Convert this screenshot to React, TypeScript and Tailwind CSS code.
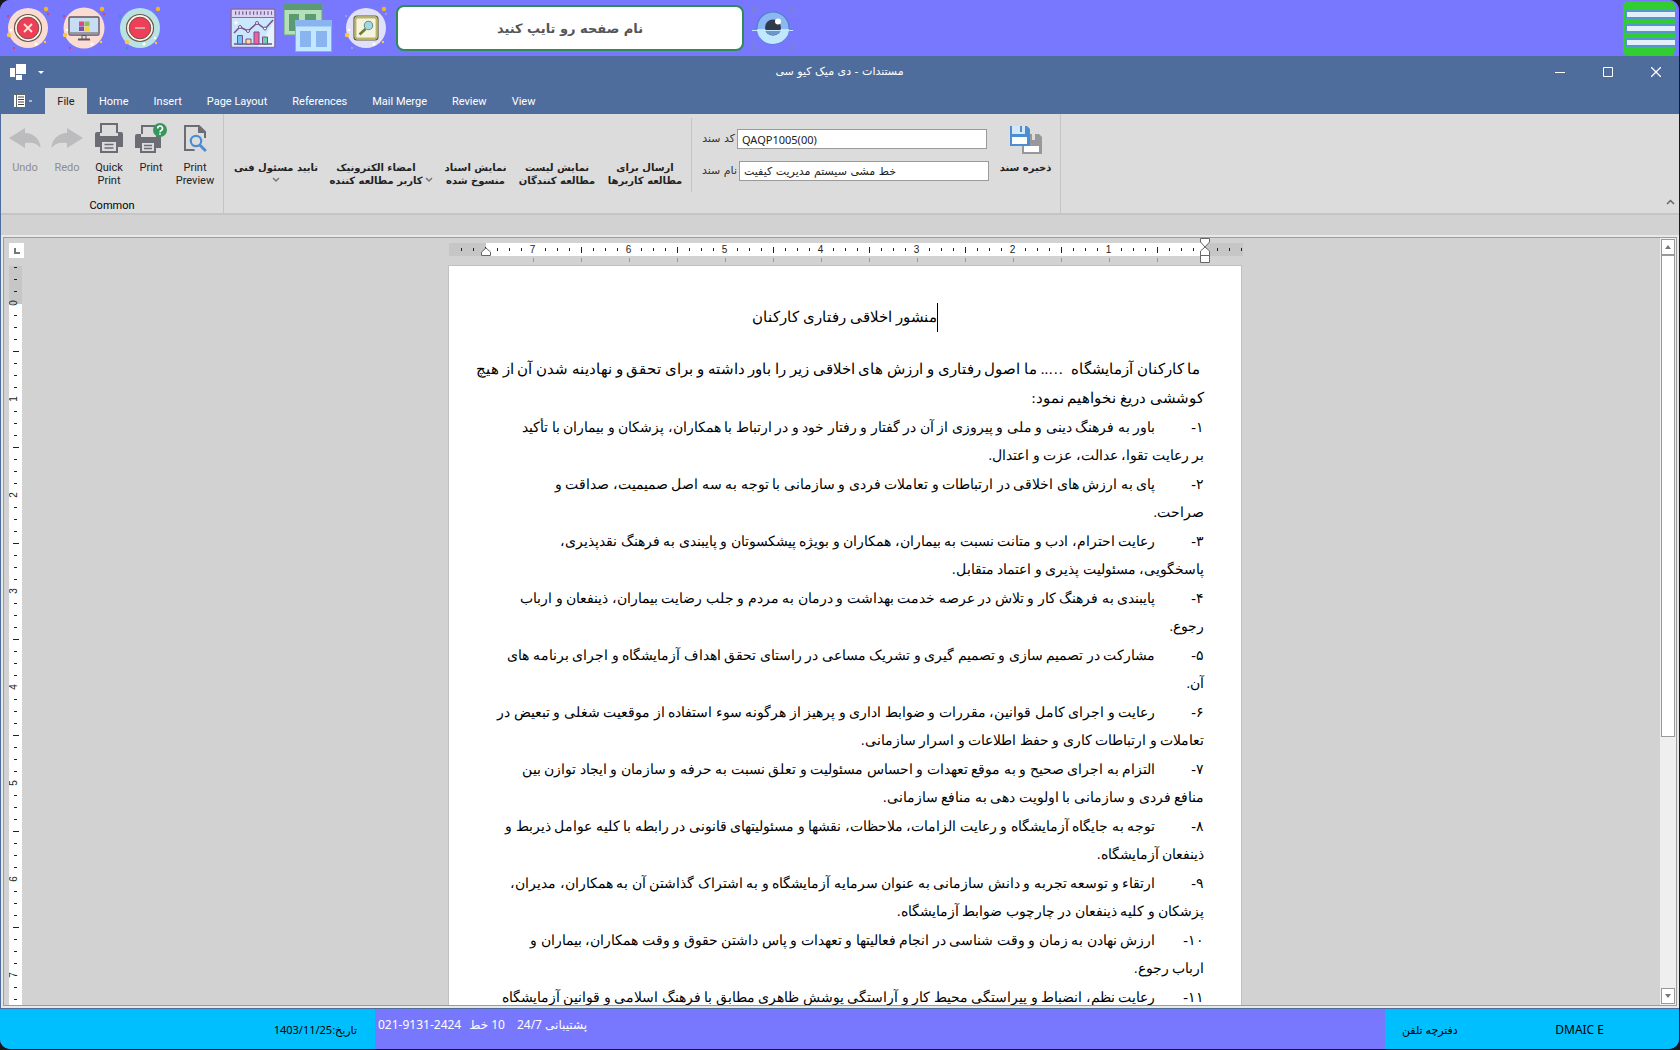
import React from "react";

const intro = [
  " ما کارکنان آزمایشگاه  ….. ما اصول رفتاری و ارزش های اخلاقی زیر را باور داشته و برای تحقق و نهادینه شدن آن از هیچ",
  "کوششی دریغ نخواهیم نمود:",
];

const items: [string, string, string][] = [
  ["۱-", "باور به فرهنگ دینی و ملی و پیروزی از آن در گفتار و رفتار خود و در ارتباط با همکاران، پزشکان و بیماران با تأکید", "بر رعایت تقوا، عدالت، عزت و اعتدال."],
  ["۲-", "پای به ارزش های اخلاقی در ارتباطات و تعاملات فردی و سازمانی با توجه به سه اصل صمیمیت، صداقت و", "صراحت."],
  ["۳-", "رعایت احترام، ادب و متانت نسبت به بیماران، همکاران و بویژه پیشکسوتان و پایبندی به فرهنگ نقدپذیری،", "پاسخگویی، مسئولیت پذیری و اعتماد متقابل."],
  ["۴-", "پایبندی به فرهنگ کار و تلاش در عرصه خدمت بهداشت و درمان به مردم و جلب رضایت بیماران، ذینفعان و ارباب", "رجوع."],
  ["۵-", "مشارکت در تصمیم سازی و تصمیم گیری و تشریک مساعی در راستای تحقق اهداف آزمایشگاه و اجرای برنامه های", "آن."],
  ["۶-", "رعایت و اجرای کامل قوانین، مقررات و ضوابط اداری و پرهیز از هرگونه سوء استفاده از موقعیت شغلی و تبعیض در", "تعاملات و ارتباطات کاری و حفظ اطلاعات و اسرار سازمانی."],
  ["۷-", "التزام به اجرای صحیح و به موقع تعهدات و احساس مسئولیت و تعلق نسبت به حرفه و سازمان و ایجاد توازن بین", "منافع فردی و سازمانی با اولویت دهی به منافع سازمانی."],
  ["۸-", "توجه به جایگاه آزمایشگاه و رعایت الزامات، ملاحظات، نقشها و مسئولیتهای قانونی در رابطه با کلیه عوامل ذیربط و", "ذینفعان آزمایشگاه."],
  ["۹-", "ارتقاء و توسعه تجربه و دانش سازمانی به عنوان سرمایه آزمایشگاه و به اشتراک گذاشتن آن به همکاران، مدیران،", "پزشکان و کلیه ذینفعان در چارچوب ضوابط آزمایشگاه."],
  ["۱۰-", "ارزش نهادن به زمان و وقت شناسی در انجام فعالیتها و تعهدات و پاس داشتن حقوق و وقت همکاران، بیماران و", "ارباب رجوع."],
  ["۱۱-", "رعایت نظم، انضباط و پیراستگی محیط کار و آراستگی پوشش ظاهری مطابق با فرهنگ اسلامی و قوانین آزمایشگاه", ""],
];

const tabs = ["Home", "Insert", "Page Layout", "References", "Mail Merge", "Review", "View"];

function Sparks({ a, b }: { a: string; b: string }) {
  return (
    <g>
      <circle cx="40" cy="3" r="2.2" fill="#f5b51b" />
      <circle cx="3" cy="29" r="2.2" fill="#fcc73c" />
      <circle cx="39" cy="36" r="1.2" fill="#fcc73c" />
      <circle cx="2" cy="10" r="1.1" fill={a} />
      <circle cx="42" cy="8" r="1.1" fill={b} />
      <circle cx="8" cy="42" r="1.1" fill={a} />
      <circle cx="30" cy="38" r="1.6" fill="#fff" />
      <circle cx="5" cy="24" r="1.2" fill="#fff" />
    </g>
  );
}

function CloseBadge() {
  return (
    <svg width="44" height="44" viewBox="0 0 44 44">
      <circle cx="22" cy="22" r="20" fill="#fbdcd3" />
      <circle cx="22" cy="22" r="13.5" fill="#fff6e8" stroke="#6d5550" strokeWidth="1.2" />
      <circle cx="22" cy="22" r="10.8" fill="#ef3f58" stroke="#6d5550" strokeWidth="1" />
      <path d="M18 18l8 8M26 18l-8 8" stroke="#fbe9d8" strokeWidth="1.8" />
      <Sparks a="#ee3350" b="#ee3350" />
    </svg>
  );
}

function MonitorBadge() {
  return (
    <svg width="44" height="44" viewBox="0 0 44 44">
      <circle cx="22" cy="22" r="20.5" fill="#fbdcd3" />
      <rect x="7" y="11" width="30" height="18" rx="1.5" fill="#c6ddf5" stroke="#5e5560" strokeWidth="1.4" />
      <path d="M7.7 26h28.6v2.5H7.7z" fill="#9b98a5" />
      <path d="M20 29.5h4v4h-4z" fill="#e9dcc8" stroke="#5e5560" />
      <path d="M16 33.5h12" stroke="#5e5560" strokeWidth="1.8" />
      <path d="M17 15.5h5V20h-5z" fill="#e8477e" />
      <path d="M22.5 15.5h5V20h-5z" fill="#8cc152" />
      <path d="M17 20.5h5V25h-5z" fill="#7d52a0" />
      <path d="M22.5 20.5h5v5h-5z" fill="#f7d43c" />
      <Sparks a="#ee3350" b="#ee3350" />
    </svg>
  );
}

function MinusBadge() {
  return (
    <svg width="44" height="44" viewBox="0 0 44 44">
      <circle cx="22" cy="22" r="20" fill="#b9e3e2" />
      <circle cx="22" cy="22" r="13.5" fill="#fff6e8" stroke="#6d5550" strokeWidth="1.2" />
      <circle cx="22" cy="22" r="10.8" fill="#ef3f58" stroke="#6d5550" strokeWidth="1" />
      <path d="M17 22h10" stroke="#d7a99f" strokeWidth="2" />
      <circle cx="40" cy="3" r="2.2" fill="#f5b51b" />
      <circle cx="9" cy="36" r="2.2" fill="#fcc73c" />
      <circle cx="38" cy="37" r="1.2" fill="#fcc73c" />
      <circle cx="2" cy="10" r="1.1" fill="#16a1a8" />
      <circle cx="9" cy="42" r="1.1" fill="#16a1a8" />
      <circle cx="26" cy="38" r="1.5" fill="#fff" />
      <circle cx="37" cy="32" r="1.2" fill="#fff" />
    </svg>
  );
}

function SearchBadge() {
  return (
    <svg width="44" height="44" viewBox="0 0 44 44">
      <circle cx="22" cy="22" r="20" fill="#e0e0f8" />
      <rect x="10" y="10" width="24" height="24" rx="3" fill="#f7f4dd" stroke="#5d5a35" strokeWidth="1.2" />
      <rect x="11.5" y="11.5" width="21" height="21" rx="2" fill="none" stroke="#b9b46a" strokeWidth="1.8" />
      <path d="M21.5 23l-6 5.5" stroke="#6b7b3a" strokeWidth="2.6" />
      <circle cx="24.5" cy="19.5" r="4.2" fill="#9fdbe0" stroke="#6f8a8a" strokeWidth="1.1" />
      <Sparks a="#a5a5d8" b="#a5a5d8" />
    </svg>
  );
}

function ChartIcon() {
  return (
    <svg width="46" height="41" viewBox="0 0 46 41">
      <rect x="1" y="1" width="44" height="38.5" rx="1.5" fill="#cbe7fb" stroke="#8b6aa8" strokeWidth="1.6" />
      <path d="M2 2h42v7H2z" fill="#dcd3f0" />
      <path d="M2 9.5h42" stroke="#8b6aa8" strokeWidth="1.2" />
      <path d="M5 5h37" stroke="#735a99" strokeWidth="3.5" strokeDasharray="1.2 2.4" />
      <path d="M28 38.5L44 14v24.5z" fill="#e4f4ff" />
      <path d="M4 25l6-6 8 4 9-8 8 6 8-9" fill="none" stroke="#75508f" strokeWidth="1.5" />
      <g fill="#fff" stroke="#75508f" strokeWidth="1">
        <circle cx="10" cy="19" r="1.5" />
        <circle cx="18" cy="23" r="1.5" />
        <circle cx="27" cy="15" r="1.5" />
        <circle cx="35" cy="20.5" r="1.5" />
      </g>
      <path d="M4 36h38" stroke="#75508f" strokeWidth="1.3" />
      <g stroke="#75508f" strokeWidth="1">
        <path d="M7.5 27.5h5V36h-5z" fill="#6cc5f4" />
        <path d="M16 31h5v5h-5z" fill="#fbe08a" />
        <path d="M24 24h5v12h-5z" fill="#f0619a" />
        <path d="M32.5 29h5v7h-5z" fill="#6fcfae" />
      </g>
      <path d="M6 12l.7 2 2 .7-2 .7-.7 2-.7-2-2-.7 2-.7z" fill="#fff" />
    </svg>
  );
}

function WindowsIcon() {
  return (
    <svg width="48" height="48" viewBox="0 0 48 48">
      <path d="M0 0h38v31H0z" fill="#b5dfb9" stroke="#66a57b" />
      <path d="M0 0h38v6H0z" fill="#5b9b74" />
      <path d="M5 10h10v17H5zM21 10h11v17H21z" fill="#5b9b74" />
      <path d="M11.5 16.5h36v31h-36z" fill="#c2e8ff" stroke="#7fb1e6" />
      <path d="M11 16h37v6.5H11z" fill="#8ab4f0" />
      <path d="M16 27h11v16H16zM32 27h11v16H32z" fill="#8ab4f0" />
    </svg>
  );
}

function EyeIcon() {
  return (
    <svg width="42" height="42" viewBox="0 0 42 42">
      <path d="M1 7V1h6M35 1h6v6M41 35v6h-6M7 41H1v-6" fill="none" stroke="#7b83c9" strokeWidth="1.5" />
      <circle cx="21" cy="21" r="16" fill="#8bb8f2" stroke="#4e7fc4" strokeWidth="1.2" />
      <path d="M5 22h32a16 15 0 0 1-32 0z" fill="#c2e8ff" />
      <circle cx="21" cy="20.5" r="8" fill="#2f3b4a" />
      <path d="M13.2 23.5a8 6 0 0 0 15.6 0z" fill="#6d97c8" />
      <path d="M0 23.5h41" stroke="#c2e8ff" strokeWidth="1.2" />
      <circle cx="26" cy="14.5" r="3" fill="#fff" />
    </svg>
  );
}

function Chevron() {
  return (
    <svg width="8" height="6" viewBox="0 0 8 6">
      <path d="M1 1l3 3 3-3" fill="none" stroke="#777" strokeWidth="1.5" />
    </svg>
  );
}

function UndoIcon({ flip }: { flip?: boolean }) {
  return (
    <svg width="32" height="32" viewBox="0 0 32 32" className={flip ? "-scale-x-100" : ""}>
      <path d="M0 16L16 6v5c9 0 15.5 7 15.5 15-3-4.500-8-6-15.500-5v5z" fill="#bcbcbe" />
    </svg>
  );
}

function PrinterIcon() {
  return (
    <svg width="32" height="32" viewBox="0 0 32 32">
      <path d="M8 11V2h16v9" fill="none" stroke="#6c6c74" strokeWidth="2" />
      <path d="M2 12q0-2 2-2h3v4h18v-4h3q2 0 2 2v13h-5v-6H7v6H2z" fill="#6c6c74" />
      <path d="M8 19h16v11H8z" fill="#dcdcdc" stroke="#6c6c74" strokeWidth="2" />
      <path d="M11.5 22.5h9M11.5 26h9" stroke="#6c6c74" strokeWidth="1.5" />
    </svg>
  );
}

function PrinterHelpIcon() {
  return (
    <svg width="34" height="32" viewBox="0 0 34 32">
      <path d="M8 12V4h13" fill="none" stroke="#6c6c74" strokeWidth="2" />
      <path d="M1 14q0-2 2-2h4v3h15v-2h5v13h-5v-6H6v6H1z" fill="#6c6c74" />
      <path d="M7 20h14v10H7z" fill="#dcdcdc" stroke="#6c6c74" strokeWidth="2" />
      <path d="M10 23.5h8M10 26.5h8" stroke="#6c6c74" strokeWidth="1.3" />
      <circle cx="26" cy="8" r="7" fill="#35985a" />
      <path d="M23.7 6.5a2.400 2.400 0 1 1 3.500 2q-1.200.7-1.200 1.700M26 11.300v1.500" fill="none" stroke="#fff" strokeWidth="1.6" />
    </svg>
  );
}

function PreviewIcon() {
  return (
    <svg width="32" height="32" viewBox="0 0 32 32">
      <path d="M26 28H6V4h14l6 6v9" fill="none" stroke="#6c6c74" strokeWidth="2" />
      <path d="M19 4v7h7z" fill="#6c6c74" />
      <path d="M13 16h15v14H16z" fill="#dcdcdc" />
      <circle cx="17" cy="19" r="5.2" fill="#dcdcdc" stroke="#4b8fd2" strokeWidth="2.2" />
      <path d="M20.8 23l6 6" stroke="#4b8fd2" strokeWidth="3" />
    </svg>
  );
}

function SaveIcon() {
  return (
    <svg width="32" height="28" viewBox="0 0 32 28">
      <path d="M12 8h17l3 3v17H12z" fill="#98989c" />
      <path d="M22 8h3v6h-3z" fill="#dcdcdc" />
      <path d="M14 20h15v6H14z" fill="#fff" />
      <path d="M0 0h17l3 3v17H0z" fill="#4b8fd2" />
      <path d="M2 0h13v8H2z" fill="#d7e6f5" />
      <path d="M10 0h2v6h-2z" fill="#4b8fd2" />
      <path d="M2 11h15v7H2z" fill="#fff" />
    </svg>
  );
}

function HorizontalRuler() {
  const ticks = Array.from({ length: 66 }, (_, i) => i - 3).filter((k) => k !== 0);
  return (
    <svg width="794" height="23" viewBox="-1 0 794 23" className="overflow-visible">
      <path d="M0 1h794v13H0z" fill="#c6c6c6" />
      <path d="M37 1h719v13H37z" fill="#fff" />
      {ticks.map((k) => {
        const x = 756.5 - 12 * k;
        if (k > 0 && k % 8 === 0 && k < 60)
          return (
            <text key={k} x={x - 1} y="11" textAnchor="middle" fontSize="10" fill="#222">
              {k / 8}
            </text>
          );
        return <path key={k} d={k > 0 && k % 4 === 0 ? `M${x} 5v6` : `M${x} 6v3`} stroke="#222" />;
      })}
      {Array.from({ length: 14 }, (_, i) => (
        <path key={i} d={`M${756.5 - 48 * (i + 1)} 16v4`} stroke="#999" />
      ))}
      <g fill="#fff" stroke="#666">
        <path d="M32.5 13.5V10l4.500-4 4.500 4v3.500z" />
        <path d="M751.5-3.5h9V0L756 5l-4.500-5zM751.500 13.500V9L756 5l4.500 4v4.500zM751.500 13.500h9v7h-9z" />
      </g>
    </svg>
  );
}

function VerticalRuler() {
  const ticks = Array.from({ length: 62 }, (_, i) => i - 3);
  return (
    <svg width="13" height="739" viewBox="0 0 13 739">
      <path d="M0 0h13v38H0z" fill="#c6c6c6" />
      {ticks.map((k) => {
        const y = 37 + 12 * k;
        if (k >= 0 && k % 8 === 0)
          return (
            <text key={k} x="0" y="0" transform={`translate(8 ${y}) rotate(-90)`} textAnchor="middle" fontSize="10" fill="#222">
              {k / 8}
            </text>
          );
        return <path key={k} d={k > 0 && k % 4 === 0 ? `M4 ${y + 0.5}h6` : `M5 ${y + 0.5}h3`} stroke="#222" />;
      })}
    </svg>
  );
}

function RibbonButton({ icon, lines, width, muted }: { icon: React.ReactNode; lines: string[]; width: string; muted?: boolean }) {
  return (
    <button className={`flex flex-col items-center pt-2 leading-[13px] ${width} ${muted ? "text-[#8e8e8e]" : "text-[#222]"}`}>
      <span className="mb-[7px] flex h-8 items-center">{icon}</span>
      {lines.map((l) => (
        <span key={l} className="whitespace-nowrap">{l}</span>
      ))}
    </button>
  );
}

function TextButton({ lines, width, chevron }: { lines: string[]; width: string; chevron?: "side" | "below" }) {
  return (
    <button dir="rtl" className={`flex justify-center gap-0.5 pt-[47px] text-[10px] font-bold leading-[13px] text-[#222] ${width}`}>
      {chevron === "side" && <span className="flex h-[26px] items-end pb-1"><Chevron /></span>}
      <span className="flex flex-col items-center whitespace-nowrap">
        {lines.map((l) => (
          <span key={l}>{l}</span>
        ))}
        {chevron === "below" && <span className="flex h-3 items-center"><Chevron /></span>}
      </span>
    </button>
  );
}

export default function App() {
  return (
    <div className="h-screen overflow-hidden bg-[#16181c] pr-px pb-px font-['Roboto','DejaVu_Sans',sans-serif] text-[11px]">
      <div className="flex h-full flex-col overflow-hidden rounded-[10px] bg-[#7878ff]">
        <header className="flex h-14 shrink-0 items-center bg-[#7878ff]">
          <button aria-label="بستن" className="ml-1.5"><CloseBadge /></button>
          <button aria-label="دسکتاپ" className="ml-3"><MonitorBadge /></button>
          <button aria-label="کوچک" className="ml-3"><MinusBadge /></button>
          <button aria-label="نمودار" className="ml-[68px]"><ChartIcon /></button>
          <button aria-label="پنجره ها" className="ml-2"><WindowsIcon /></button>
          <button aria-label="جستجو" className="ml-3"><SearchBadge /></button>
          <input
            dir="rtl"
            aria-label="نام صفحه"
            placeholder="نام صفحه رو تایپ کنید"
            className="ml-2 h-[46px] w-[348px] rounded-lg border-2 border-[#2e8b57] bg-white text-center font-['DejaVu_Sans',sans-serif] text-[13px] font-bold outline-none placeholder:text-[#555]"
          />
          <button aria-label="نمایش" className="ml-2"><EyeIcon /></button>
          <button aria-label="منو" className="mr-1 ml-auto flex h-[55px] w-[52px] flex-col justify-center gap-[5px] self-end rounded-md bg-[#32cd32] pl-0.5">
            <span className="h-[9px] border-2 border-r-0 border-[#5596cf] bg-[#e2f0fc]" />
            <span className="h-[9px] border-2 border-r-0 border-[#5596cf] bg-[#e2f0fc]" />
            <span className="h-[9px] border-2 border-r-0 border-[#5596cf] bg-[#e2f0fc]" />
          </button>
        </header>

        <section className="flex min-h-0 flex-1 flex-col border-b border-l border-[#4f6d9c] bg-[#d2d2d2]">
          <div className="-ml-px grid h-8 shrink-0 grid-cols-3 items-center bg-[#4f6d9c] text-white">
            <div className="flex items-center gap-3 pl-2.5">
              <svg width="16" height="16" viewBox="0 0 16 16" fill="#fff"><path d="M0 4h5v9H0zM6 0h10v10H6zM6 11h6v5H6z" /></svg>
              <svg width="6" height="3" viewBox="0 0 6 3"><path d="M0 0h6L3 3z" fill="#fff" /></svg>
            </div>
            <h1 dir="rtl" className="text-center font-['DejaVu_Sans',sans-serif]">مستندات - دی میک کیو سی</h1>
            <div className="flex justify-end gap-[38px] pr-[18px]">
              <button aria-label="Minimize"><svg width="10" height="10" viewBox="0 0 10 10"><path d="M0 5.5h10" stroke="#fff" /></svg></button>
              <button aria-label="Maximize"><svg width="10" height="10" viewBox="0 0 10 10"><path d="M.5.5h9v9h-9z" fill="none" stroke="#fff" /></svg></button>
              <button aria-label="Close"><svg width="10" height="10" viewBox="0 0 10 10"><path d="M0 0l10 10M10 0L0 10" stroke="#fff" strokeWidth="1.3" /></svg></button>
            </div>
          </div>

          <nav className="-ml-px flex h-[26px] shrink-0 items-stretch bg-[#4f6d9c] text-white">
            <button aria-label="Application menu" className="flex w-[45px] items-center gap-[3px] pl-[13px]">
              <svg width="13" height="14" viewBox="0 0 13 14"><path d="M.5.5h12v13H.5z" fill="#fff" stroke="#666" /><path d="M3.5 0v14" stroke="#666" /><path d="M5 3h6M5 5.5h6M5 8h6M5 10.5h6" stroke="#444" /></svg>
              <span className="h-0.5 w-[3px] bg-[#b5b5b5]" />
            </button>
            <button className="w-[42px] bg-[#dcdcdc] pt-0.5 text-[#222]">File</button>
            {tabs.map((t) => (
              <button key={t} className="pt-0.5 pr-[13px] pl-3">{t}</button>
            ))}
          </nav>

          <div className="flex h-[101px] shrink-0 border-b-2 border-[#c5c5c5] bg-[#dcdcdc]">
            <div className="flex w-[223px] flex-col justify-between border-r border-[#c5c5c5]">
              <div className="flex pl-[3px]">
                <RibbonButton width="w-[42px]" icon={<UndoIcon />} lines={["Undo"]} muted />
                <RibbonButton width="w-[42px]" icon={<UndoIcon flip />} lines={["Redo"]} muted />
                <RibbonButton width="w-[42px]" icon={<PrinterIcon />} lines={["Quick", "Print"]} />
                <RibbonButton width="w-[42px]" icon={<PrinterHelpIcon />} lines={["Print"]} />
                <RibbonButton width="w-[46px]" icon={<PreviewIcon />} lines={["Print", "Preview"]} />
              </div>
              <div className="text-center leading-[15px]">Common</div>
            </div>
            <div className="flex items-start border-r border-[#c5c5c5] pl-1 font-['DejaVu_Sans',sans-serif]">
              <TextButton width="w-24" lines={["تایید مسئول فنی"]} chevron="below" />
              <TextButton width="w-[114px]" lines={["امضاء الکترونیک", "کاربر مطالعه کننده"]} chevron="side" />
              <TextButton width="w-[75px]" lines={["نمایش اسناد", "منسوخ شده"]} />
              <TextButton width="w-[88px]" lines={["نمایش لیست", "مطالعه کنندگان"]} />
              <TextButton width="w-[88px]" lines={["ارسال برای", "مطالعه کاربرها"]} />
              <div className="mt-1 ml-0.5 h-[74px] border-l border-[#c5c5c5]" />
              <div className="flex flex-col gap-3 pt-[15px] pl-2 text-[#333]">
                <div className="flex items-center gap-0.5">
                  <label htmlFor="code" dir="rtl" className="w-[35px] whitespace-nowrap text-right">کد سند</label>
                  <input id="code" defaultValue="QAQP1005(00)" className="h-5 w-[250px] border border-[#9a9a9a] bg-white px-1 font-['Noto_Sans',sans-serif] text-[#222]" />
                </div>
                <div className="flex items-center gap-0.5">
                  <label htmlFor="name" dir="rtl" className="w-[37px] whitespace-nowrap text-right">نام سند</label>
                  <input id="name" defaultValue="خط مشی سیستم مدیریت کیفیت" className="h-5 w-[250px] border border-[#9a9a9a] bg-white px-1 text-[#222]" />
                </div>
              </div>
              <button dir="rtl" className="ml-0.5 flex w-[69px] flex-col items-center pt-3 text-[10px] font-bold leading-[13px] text-[#222]">
                <SaveIcon />
                <span className="mt-[7px] whitespace-nowrap">ذخیره سند</span>
              </button>
            </div>
            <button aria-label="Collapse ribbon" className="mt-auto mr-1 mb-2 ml-auto">
              <svg width="9" height="6" viewBox="0 0 9 6"><path d="M1 5l3.5-3.500L8 5" fill="none" stroke="#666" strokeWidth="1.5" /></svg>
            </button>
          </div>

          <div className="h-5 shrink-0" />

          <div className="flex min-h-0 flex-1 border-2 border-[#e8e8e8]">
            <div className="flex min-h-0 flex-1 border border-[#9c9c9c]">
              <div className="flex w-[26px] shrink-0 flex-col gap-2 overflow-hidden pt-[5px] pl-[5px]">
                <div className="flex size-[15px] shrink-0 items-center justify-center bg-white">
                  <span className="size-1.5 border-b-2 border-l-2 border-[#777]" />
                </div>
                <div className="min-h-0 w-[13px] flex-1 overflow-hidden bg-white font-['Liberation_Sans',sans-serif]"><VerticalRuler /></div>
              </div>

              <main className="flex min-w-0 flex-1 flex-col items-center overflow-hidden">
                <div className="w-[794px] pt-1 font-['Liberation_Sans',sans-serif]"><HorizontalRuler /></div>
                <article dir="rtl" className="w-[794px] shrink-0 border border-[#c0c0c0] bg-white pt-[37px] pr-[37px] font-['Liberation_Serif',serif] text-[14px] leading-[29px] text-black">
                  <h2 className="mb-[23px] flex justify-center pl-[37px] text-[15px]">
                    <span className="border-r border-black">منشور اخلاقی رفتاری کارکنان</span>
                  </h2>
                  <div className="whitespace-pre text-[15px]">
                    {intro.map((l) => (
                      <p key={l}>{l}</p>
                    ))}
                  </div>
                  {items.map(([n, first, second]) => (
                    <div key={n} className="whitespace-nowrap">
                      <p className="flex h-7">
                        <span className="w-[49px] shrink-0">{n}</span>
                        <span>{first}</span>
                      </p>
                      {second && <p>{second}</p>}
                    </div>
                  ))}
                </article>
              </main>

              <div className="flex w-4 shrink-0 flex-col bg-[#efefef] p-px">
                <button aria-label="Scroll up" className="flex h-4 shrink-0 items-center justify-center border border-[#999] bg-white"><svg width="6" height="4" viewBox="0 0 6 4"><path d="M0 4h6L3 0z" fill="#777" /></svg></button>
                <div className="mb-auto h-[63%] border border-[#999] bg-white" />
                <button aria-label="Scroll down" className="flex h-4 shrink-0 items-center justify-center border border-[#999] bg-white"><svg width="6" height="4" viewBox="0 0 6 4"><path d="M0 0h6L3 4z" fill="#777" /></svg></button>
              </div>
            </div>
          </div>
        </section>

        <footer className="flex h-10 shrink-0 font-['Noto_Sans','DejaVu_Sans',sans-serif] text-black">
          <div dir="rtl" className="w-[375px] bg-[#00bfff] pt-[13px] pr-[18px] leading-4">تاریخ:1403/11/25</div>
          <div className="flex gap-2 pt-2 pl-[3px] text-[12px] leading-4 text-white">
            <span>021-9131-2424</span>
            <span dir="rtl">10 خط</span>
            <span dir="rtl" className="ml-1">پشتیبانی 24/7</span>
          </div>
          <div className="ml-auto flex w-[294px] justify-between bg-[#00bfff] pt-[13px] pr-[75px] pl-[17px] leading-4">
            <span dir="rtl">دفترچه تلفن</span>
            <span className="text-[12px]">DMAIC E</span>
          </div>
        </footer>
      </div>
    </div>
  );
}
